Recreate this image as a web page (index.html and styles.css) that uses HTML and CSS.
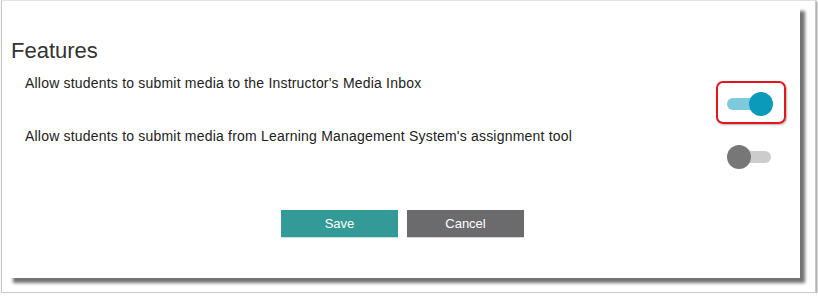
FILE: index.html
```html
<!DOCTYPE html>
<html>
<head>
    <meta charset="utf-8" />
    <title>Features</title>
    <link rel="stylesheet" href="styles.css">
</head>
<body>
    <div class="frame">
        <div class="panel">
            <h2>Features</h2>

            <div class="feature">
                <div class="feature_label">Allow students to submit media to the Instructor's Media Inbox</div>
                <div class="feature_control">
                    <span class="switch on highlight"><span class="track"></span><span class="thumb"></span></span>
                </div>
            </div>

            <div class="feature">
                <div class="feature_label">Allow students to submit media from Learning Management System's assignment tool</div>
                <div class="feature_control">
                    <span class="switch"><span class="track"></span><span class="thumb"></span></span>
                </div>
            </div>

            <div class="actions">
                <button class="btn save">Save</button>
                <button class="btn cancel">Cancel</button>
            </div>
        </div>
    </div>
</body>
</html>
```

FILE: styles.css
```css
body {
    margin: 0;
    background-color: white;
    color: #333;
    font-family: "Liberation Sans", Arial, sans-serif;
}

.frame {
    margin-left: 1px;
    width: 813px;
    height: 291px;
    border: 1px solid #c8c8c8;
    border-top-color: #e2e2e2;
    box-shadow: 1px 1px 2px rgba(0, 0, 0, 0.45);
    background: white;
}

.panel {
    margin: 5px 0 0 6px;
    width: 792px;
    height: 272px;
    box-sizing: border-box;
    padding: 32px 0 0 3px;
    background: white;
    box-shadow: 5px 5px 3px rgba(0, 0, 0, 0.55);
}

.panel > h2 {
    margin: 0;
    font-size: 22px;
    font-weight: normal;
    line-height: 25px;
    color: #333;
}

.feature {
    margin: 12px 0 12px 14px;
}
.feature + .feature {
    margin-top: 0;
}

.feature_label {
    font-size: 14px;
    letter-spacing: 0.2px;
    line-height: 16px;
    color: #222;
}

.feature_control {
    display: flex;
    justify-content: flex-end;
    margin-top: 1px;
    padding-right: 27px;
}

.switch {
    position: relative;
    display: block;
    width: 46px;
    height: 24px;
}
.switch .track {
    position: absolute;
    left: 2px;
    top: 6px;
    width: 42px;
    height: 12px;
    border-radius: 6px;
    background: #cccccc;
}
.switch .thumb {
    position: absolute;
    left: 0;
    top: 0;
    width: 24px;
    height: 24px;
    border-radius: 50%;
    background: #777777;
}
.switch.on .track {
    background: #7ccadb;
    width: 40px;
    left: 0;
}
.switch.on .thumb {
    left: 22px;
    background: #0b9aba;
}

/* red annotation box round the first toggle */
.switch.highlight::after {
    content: "";
    position: absolute;
    top: -11px;
    left: -11px;
    right: -13px;
    bottom: -8px;
    border: 2px solid #e3161d;
    border-radius: 7px;
    box-shadow: 1px 1px 2px rgba(0, 0, 0, 0.3);
}

.actions {
    display: flex;
    justify-content: center;
    gap: 9px;
    margin-top: 41px;
    padding-right: 6px;
}

.btn {
    width: 117px;
    height: 28px;
    border: none;
    font-family: "Liberation Sans", Arial, sans-serif;
    font-size: 13px;
    color: white;
    padding: 0;
}
.btn.save {
    background: #339a97;
    border-bottom: 1px solid #bfe3e3;
}
.btn.cancel {
    background: #6b6b6e;
    border-bottom: 1px solid #d6d6d6;
}
```
